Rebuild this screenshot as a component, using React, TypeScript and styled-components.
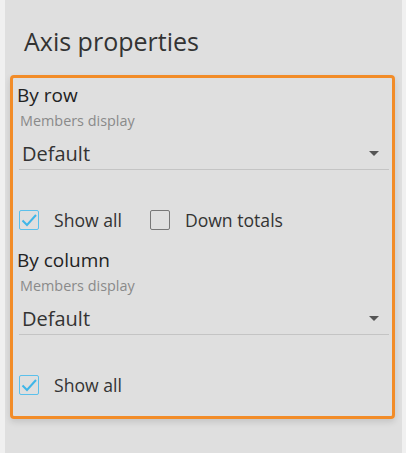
import React from 'react';
import styled, { createGlobalStyle } from 'styled-components';

const GlobalStyle = createGlobalStyle`
	html, body {
		margin: 0;
		padding: 0;
		background: #f0f0f0;
		font-family: "Open Sans", "Liberation Sans", sans-serif;
	}
`;

const Panel = styled.div`
	margin: 0 4px 0 5px;
	height: 453px;
	background: #dfdfdf;
	padding: 0 7px 0 5px;
	box-sizing: border-box;
	overflow: hidden;
`;

const Title = styled.h2`
	margin: 0;
	padding: 24px 0 0 14px;
	height: 75px;
	box-sizing: border-box;
	font-size: 25px;
	font-weight: 400;
	line-height: 34px;
	color: #333;
`;

const Box = styled.div`
	border: 3px solid #f28c28;
	border-radius: 4px;
	padding: 4px 3px 19px 4px;
	box-shadow: 0 3px 6px rgba(0, 0, 0, 0.12);
`;

const SectionTitle = styled.div<{ $top?: number }>`
	margin-top: ${({ $top }) => $top ?? 0}px;
	font-size: 19px;
	line-height: 26px;
	color: #222;
`;

const FieldLabel = styled.div`
	margin: 4px 0 0 3px;
	font-size: 14.4px;
	line-height: 17px;
	color: #8a8a8a;
`;

const Select = styled.div`
	margin: 8px 0 0 2px;
	display: flex;
	align-items: center;
	justify-content: space-between;
	height: 32px;
	border-bottom: 1px solid #c4c4c4;
	padding: 0 10px 0 3px;
	font-size: 20px;
	color: #333;
`;

const Caret = styled.span`
	width: 0;
	height: 0;
	border-left: 5px solid transparent;
	border-right: 5px solid transparent;
	border-top: 5px solid #555;
`;

const CheckRow = styled.div`
	display: flex;
	align-items: center;
	gap: 28px;
	margin: 38px 0 0 2px;
	height: 24px;
`;

const Check = styled.label`
	display: flex;
	align-items: center;
	gap: 15px;
	font-size: 17.6px;
	color: #333;
`;

const Square = styled.span<{ $on?: boolean }>`
	width: 18px;
	height: 18px;
	border: 1px solid ${({ $on }) => ($on ? '#5bc0eb' : '#777')};
	border-radius: 2px;
	display: flex;
	align-items: center;
	justify-content: center;
`;

function CheckBox({ on, label }: { on?: boolean; label: string }) {
	return (
		<Check>
			<Square $on={on}>
				{on && (
					<svg width="16" height="14" viewBox="0 0 16 14">
						<path d="M1.5 7.5 L6 12 L15 2" fill="none" stroke="#3fb6e8" strokeWidth="2" />
					</svg>
				)}
			</Square>
			{label}
		</Check>
	);
}

export default function App() {
	return (
		<>
			<GlobalStyle />
			<Panel>
				<Title>Axis properties</Title>
				<Box>
					<SectionTitle>By row</SectionTitle>
					<FieldLabel>Members display</FieldLabel>
					<Select>
						Default
						<Caret />
					</Select>
					<CheckRow>
						<CheckBox on label="Show all" />
						<CheckBox label="Down totals" />
					</CheckRow>
					<SectionTitle $top={15}>By column</SectionTitle>
					<FieldLabel>Members display</FieldLabel>
					<Select>
						Default
						<Caret />
					</Select>
					<CheckRow>
						<CheckBox on label="Show all" />
					</CheckRow>
				</Box>
			</Panel>
		</>
	);
}
